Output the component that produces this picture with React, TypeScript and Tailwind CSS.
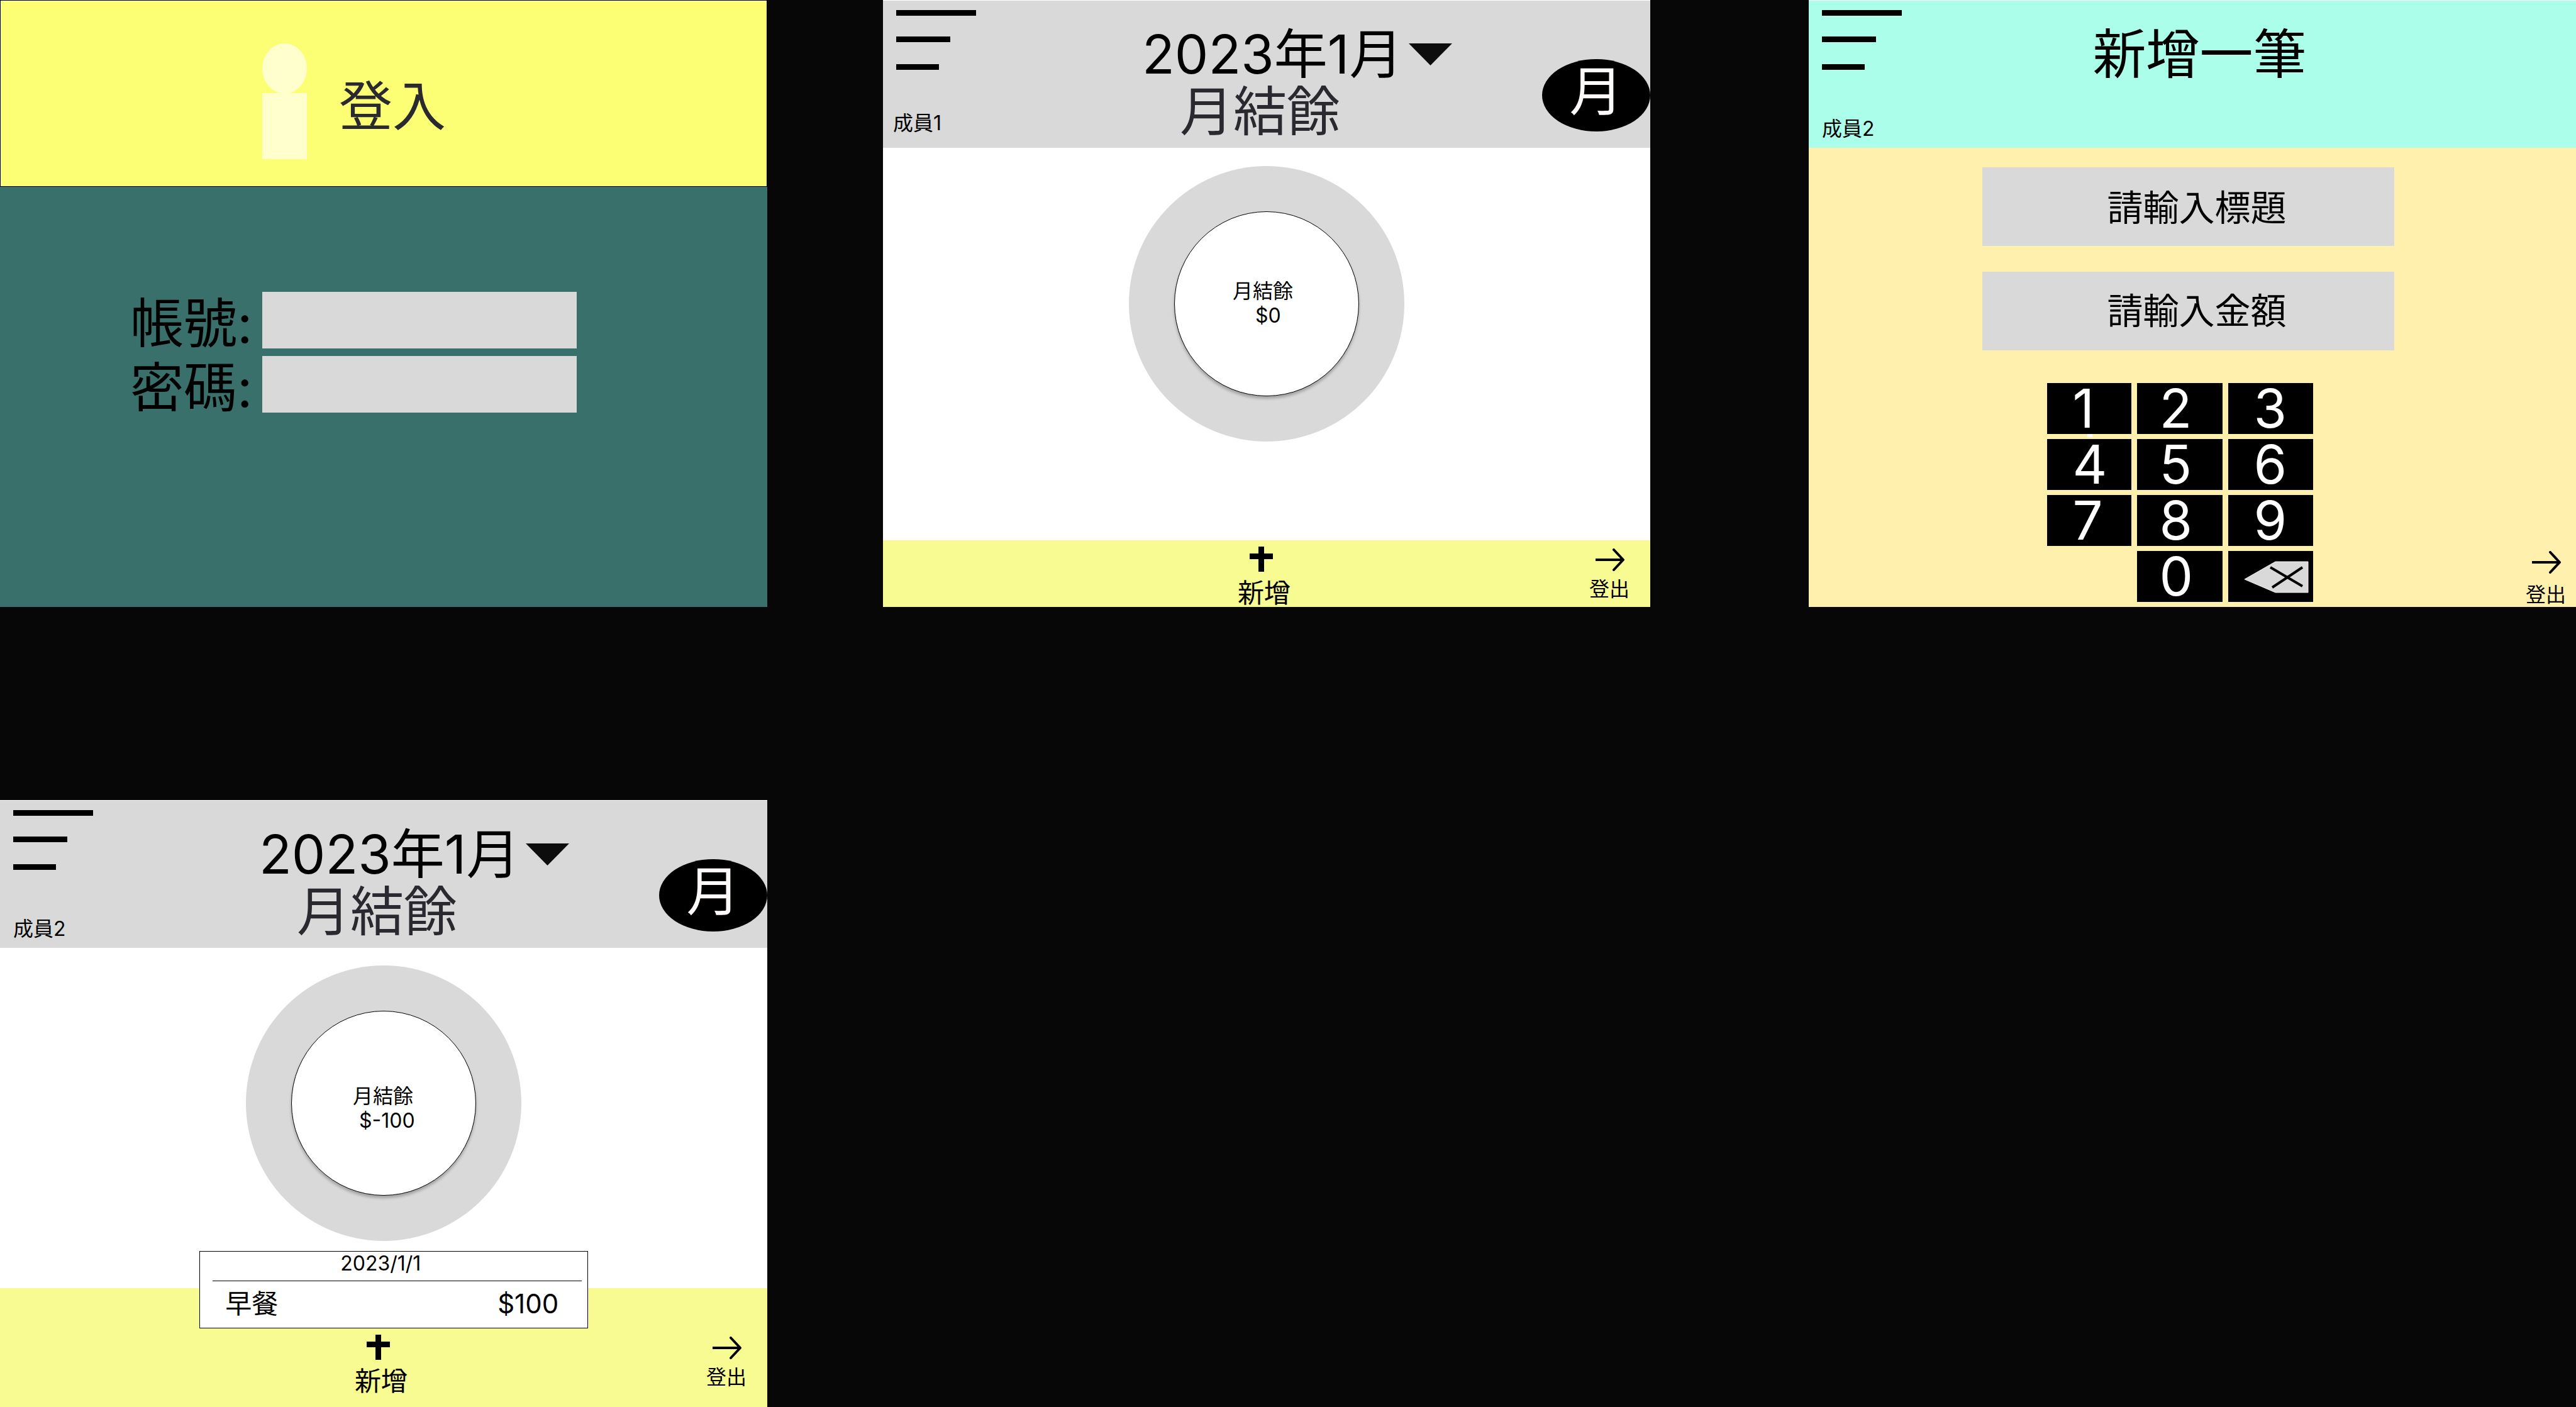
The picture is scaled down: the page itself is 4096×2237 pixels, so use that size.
import React from "react";

const label = "text-[32px] leading-[39px]";

function MenuButton() {
  return (
    <button type="button" aria-label="選單" className="flex flex-col items-start">
      <span className="h-[9px] w-[127px] bg-black" />
      <span className="mt-[33px] h-[9px] w-[86px] bg-black" />
      <span className="mt-[35px] h-[9px] w-[68px] bg-black" />
    </button>
  );
}

function LogoutButton({ className }: { className: string }) {
  return (
    <button type="button" className={`flex flex-col items-center ${label} ${className}`}>
      <svg width="48" height="36" viewBox="0 0 48 36" fill="none" stroke="black" strokeWidth="4" aria-hidden="true">
        <path d="M2 18H46" />
        <path d="M31 2L46 18L31 34" strokeLinecap="round" strokeLinejoin="round" />
      </svg>
      登出
    </button>
  );
}

function AddButton() {
  return (
    <button type="button" className="mr-[8px] flex flex-col items-center gap-[8px] text-[42px] leading-[51px]">
      <svg width="37" height="40" viewBox="0 0 37 40" className="mr-[9px]" aria-hidden="true">
        <path d="M14 0h9v11h14v9H23v20h-9V20H0v-9h14z" fill="black" />
      </svg>
      新增
    </button>
  );
}

function LoginPanel() {
  return (
    <section className="col-start-1 flex flex-col bg-[#3a706b]">
      <header className="flex h-[297px] items-start border border-black bg-[#fcff73] pl-[416px]">
        <svg width="71" height="184" viewBox="0 0 71 184" className="mt-[68px]" aria-hidden="true">
          <ellipse cx="35.5" cy="40" rx="35.5" ry="40" fill="#ffffcd" />
          <rect y="79" width="71" height="105" fill="#ffffcd" />
        </svg>
        <h1 className="mt-[117px] ml-[51px] text-[85px] leading-[103px] text-[#2b2930]">登入</h1>
      </header>
      <form className="flex flex-col gap-[12px] pt-[167px] pb-[309px] pl-[207px]">
        <div className="flex h-[90px] items-center">
          <label htmlFor="account" className="w-[210px] pt-[12px] text-[85px] leading-[90px]">帳號:</label>
          <input id="account" type="text" className="h-[90px] w-[500px] bg-[#d9d9d9] px-6 text-[42px]" />
        </div>
        <div className="flex h-[90px] items-center">
          <label htmlFor="password" className="w-[210px] pt-[12px] text-[85px] leading-[90px]">密碼:</label>
          <input id="password" type="password" className="h-[90px] w-[500px] bg-[#d9d9d9] px-6 text-[42px]" />
        </div>
      </form>
    </section>
  );
}

function MonthHeader({ member, memberClass }: { member: string; memberClass: string }) {
  return (
    <header className="flex h-[235px] items-start border-t border-white bg-[#d9d9d9]">
      <div className="w-[412px] pt-[15px]">
        <div className="pl-[21px]">
          <MenuButton />
        </div>
        <p className={`${label} ${memberClass}`}>{member}</p>
      </div>
      <div className="flex-1 pt-[40px]">
        <div className="flex items-center">
          <select
            aria-label="月份"
            className="h-[91px] appearance-none bg-transparent p-0 text-[85px] leading-[91px]"
            defaultValue="2023-01"
          >
            <option value="2023-01">2023年1月</option>
          </select>
          <svg width="69" height="35" viewBox="0 0 69 35" className="ml-[9px]" aria-hidden="true">
            <path d="M0 0H69L34.500 35Z" fill="#0d0d0d" />
          </svg>
        </div>
        <h2 className="pl-[60px] text-[85px] leading-[91px] text-[#2b2930]">月結餘</h2>
      </div>
      <button
        type="button"
        className="mt-[93px] flex h-[115px] w-[172px] justify-center rounded-[50%] bg-black text-[85px] leading-[103px] text-[#fffbfb]"
      >
        月
      </button>
    </header>
  );
}

function BalanceRing({ amount, textClass, amountClass }: { amount: string; textClass: string; amountClass: string }) {
  return (
    <div className="mx-auto flex size-[438px] items-center justify-center rounded-full bg-[#d9d9d9]">
      <div className="flex size-[294px] flex-col rounded-full border border-black bg-white shadow-[0_4px_4px_rgba(0,0,0,0.25)]">
        <div className={`${label} ${textClass}`}>
          <p>月結餘</p>
          <p className={amountClass}>{amount}</p>
        </div>
      </div>
    </div>
  );
}

function Footer({ className }: { className: string }) {
  return (
    <footer className={`grid grid-cols-[1fr_auto_1fr] items-start bg-[#f8fa92] ${className}`}>
      <span />
      <AddButton />
      <div className="flex justify-end pt-[3px] pr-[33px]">
        <LogoutButton className="gap-[9px]" />
      </div>
    </footer>
  );
}

function EmptyMonthPanel() {
  return (
    <section className="col-start-3 flex flex-col bg-white">
      <MonthHeader member="成員1" memberClass="pt-[65px] pl-[16px]" />
      <div className="pt-[29px] pb-[157px]">
        <BalanceRing amount="$0" textClass="pt-[106px] pl-[92px]" amountClass="pl-[36px]" />
      </div>
      <Footer className="h-[106px] pt-[10px]" />
    </section>
  );
}

const keyBase = "flex h-[81px] items-center bg-black text-[85px] leading-[81px] text-white";

function NewEntryPanel() {
  return (
    <section className="col-start-5 flex flex-col bg-[#fff0ad]">
      <header className="flex h-[235px] items-start border-t border-white bg-[#abffea]">
        <div className="w-[37%] pt-[15px] pl-[21px]">
          <MenuButton />
          <p className={`${label} pt-[74px]`}>成員2</p>
        </div>
        <h2 className="pt-[40px] text-[85px] leading-[91px]">新增一筆</h2>
      </header>
      <div className="flex flex-1 flex-col items-center gap-[41px] pt-[31px] pr-[14px]">
        <input
          type="text"
          aria-label="標題"
          placeholder="請輸入標題"
          className="h-[125px] w-[655px] bg-[#d9d9d9] pt-[3px] pl-[199px] text-[57px] placeholder:text-black"
        />
        <input
          type="text"
          aria-label="金額"
          placeholder="請輸入金額"
          className="h-[125px] w-[655px] bg-[#d9d9d9] pl-[199px] text-[57px] placeholder:text-black"
        />
      </div>
      <div className="grid grid-cols-[1fr_auto_1fr] pt-[51px]">
        <span />
        <div className="relative mr-[40px] mb-[8px] grid grid-cols-[134px_136px_135px] gap-x-[9px] gap-y-[8px]">
          <span className="absolute top-[81px] left-[64px] h-[5px] w-[8px] bg-white" />
          <button type="button" className={`${keyBase} pl-[41px]`}>1</button>
          <button type="button" className={`${keyBase} pl-[36px]`}>2</button>
          <button type="button" className={`${keyBase} pl-[41px]`}>3</button>
          <button type="button" className={`${keyBase} pl-[41px]`}>4</button>
          <button type="button" className={`${keyBase} pl-[36px]`}>5</button>
          <button type="button" className={`${keyBase} pl-[41px]`}>6</button>
          <button type="button" className={`${keyBase} pl-[41px]`}>7</button>
          <button type="button" className={`${keyBase} pl-[36px]`}>8</button>
          <button type="button" className={`${keyBase} pl-[41px]`}>9</button>
          <button type="button" className={`${keyBase} col-start-2 pl-[36px]`}>0</button>
          <button type="button" aria-label="刪除" className="h-[81px] bg-black">
            <svg width="134" height="81" viewBox="0 0 134 81" aria-hidden="true">
              <path d="M26 45L75 17H127V66H75Z" fill="#d9d9d9" stroke="#f2f2f2" strokeWidth="1" />
              <path d="M67 26L118 56M118 26L70 58" stroke="black" strokeWidth="4" />
            </svg>
          </button>
        </div>
        <div className="flex items-end justify-end pr-[16px]">
          <LogoutButton className="gap-[14px]" />
        </div>
      </div>
    </section>
  );
}

function EntryMonthPanel() {
  return (
    <section className="col-start-1 flex flex-col bg-white">
      <MonthHeader member="成員2" memberClass="pt-[74px] pl-[21px]" />
      <div className="pt-[28px]">
        <BalanceRing amount="$-100" textClass="pt-[115px] pl-[97px]" amountClass="pl-[10px]" />
      </div>
      <div className="flex flex-1 flex-col bg-linear-to-b from-white from-[75px] to-[#f8fa92] to-[75px]">
        <article className="mt-[16px] ml-[26%] h-[123px] w-[618px] border border-black bg-white">
          <p className="pl-[223px] text-[32px] leading-[38px]">2023/1/1</p>
          <hr className="mt-[8px] mr-[9px] ml-[20px] border-black" />
          <p className="flex justify-between pt-[10px] pr-[46px] pl-[40px] text-[42px] leading-[51px]">
            <span>早餐</span>
            <span>$100</span>
          </p>
        </article>
        <Footer className="h-[125px] pt-[10px]" />
      </div>
    </section>
  );
}

export default function App() {
  return (
    <main className="grid min-h-screen grid-cols-[1220fr_184fr_1220fr_252fr_1220fr] content-start gap-y-[307px] bg-[#070707] font-['Inter','Noto_Sans_CJK_JP',sans-serif] text-black">
      <LoginPanel />
      <EmptyMonthPanel />
      <NewEntryPanel />
      <EntryMonthPanel />
    </main>
  );
}
